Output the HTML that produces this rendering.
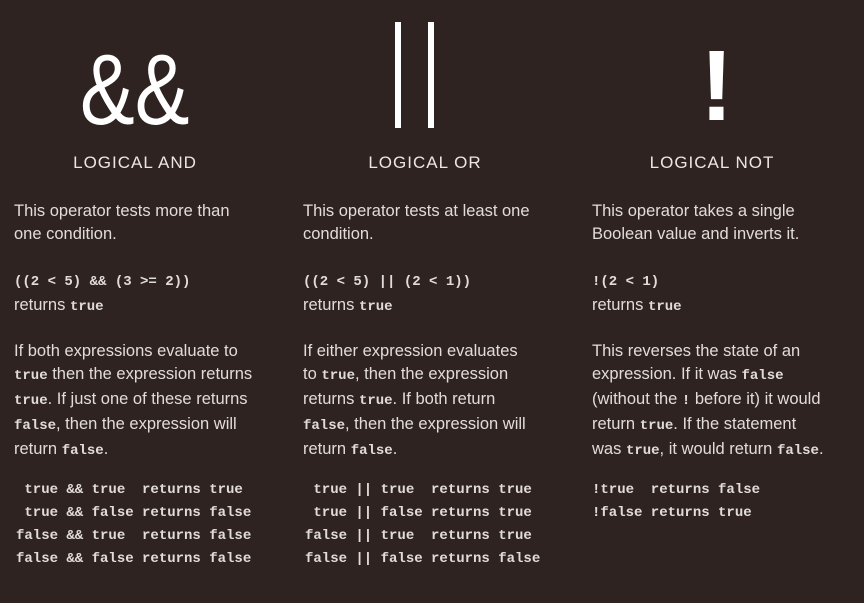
<!DOCTYPE html>
<html><head><style>
body{margin:0;width:864px;height:603px;background:#2e2321;overflow:hidden;position:relative;font-family:"Liberation Sans",sans-serif;color:#e2dcd8}
.a{position:absolute;white-space:pre;font-size:16.5px;line-height:23px}
.m{font-family:"Liberation Mono",monospace;font-size:14px;font-weight:bold}
.h{position:absolute;font-size:17px;letter-spacing:1px;top:153px;width:290px;text-align:center;color:#ede6e0}
.big{position:absolute;color:#fff;line-height:1}
.bar{position:absolute;background:#fff;width:6px;top:22px;height:106px}
</style></head><body>
<div class="big" style="left:80px;top:40px;font-size:100px;transform:scaleX(0.82);transform-origin:left top">&amp;&amp;</div>
<div class="bar" style="left:395px"></div>
<div class="bar" style="left:428px"></div>
<div class="big" style="left:700px;top:36px;font-size:100px;font-weight:bold">!</div>
<div class="h" style="left:-10px">LOGICAL AND</div>
<div class="h" style="left:280px">LOGICAL OR</div>
<div class="h" style="left:567px">LOGICAL NOT</div>

<div class="a" style="left:14px;top:200px">This operator tests more than
one condition.</div>
<div class="a" style="left:14px;top:269px"><span class="m">((2 &lt; 5) &amp;&amp; (3 &gt;= 2))</span>
returns <span class="m">true</span></div>
<div class="a" style="left:14px;top:340px">If both expressions evaluate to
<span class="m">true</span> then the expression returns
<span class="m">true</span>. If just one of these returns
<span class="m">false</span>, then the expression will
return <span class="m">false</span>.</div>
<div class="a m" style="left:16px;top:479px"> true &amp;&amp; true  returns true
 true &amp;&amp; false returns false
false &amp;&amp; true  returns false
false &amp;&amp; false returns false</div>

<div class="a" style="left:303px;top:200px">This operator tests at least one
condition.</div>
<div class="a" style="left:303px;top:269px"><span class="m">((2 &lt; 5) || (2 &lt; 1))</span>
returns <span class="m">true</span></div>
<div class="a" style="left:303px;top:340px">If either expression evaluates
to <span class="m">true</span>, then the expression
returns <span class="m">true</span>. If both return
<span class="m">false</span>, then the expression will
return <span class="m">false</span>.</div>
<div class="a m" style="left:305px;top:479px"> true || true  returns true
 true || false returns true
false || true  returns true
false || false returns false</div>

<div class="a" style="left:592px;top:200px">This operator takes a single
Boolean value and inverts it.</div>
<div class="a" style="left:592px;top:269px"><span class="m">!(2 &lt; 1)</span>
returns <span class="m">true</span></div>
<div class="a" style="left:592px;top:340px">This reverses the state of an
expression. If it was <span class="m">false</span>
(without the <span class="m">!</span> before it) it would
return <span class="m">true</span>. If the statement
was <span class="m">true</span>, it would return <span class="m">false</span>.</div>
<div class="a m" style="left:592px;top:479px">!true  returns false
!false returns true</div>
</body></html>
